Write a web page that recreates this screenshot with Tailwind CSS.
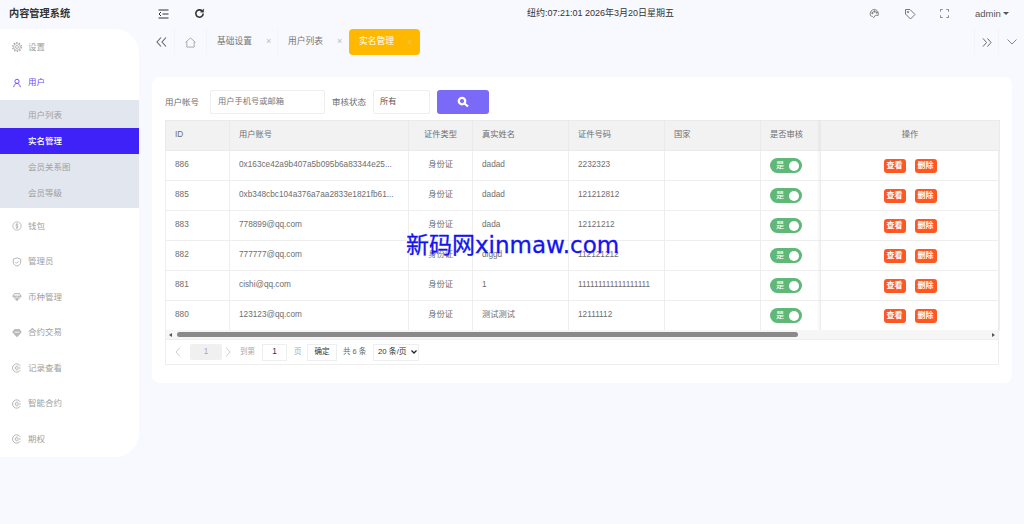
<!DOCTYPE html>
<html lang="zh"><head><meta charset="utf-8"><script src="https://cdn.jsdelivr.net/npm/@tailwindcss/browser@4"></script></head>
<body class="m-0 w-[1024px] h-[524px] overflow-hidden bg-[#f8f9fe] text-[8.25px] text-[#6e6e6e] font-['Liberation_Sans','Noto_Sans_CJK_SC',sans-serif] relative">
<div class="flex h-[524px]">
  <aside class="w-[139px] shrink-0 flex flex-col">
    <div class="h-[29px] pl-[9px] flex items-center text-[10.2px] font-semibold text-[#333] pb-[2px]">内容管理系统</div>
    <nav class="h-[428px] bg-white rounded-r-[24px] text-[8.5px] text-[#a0a0a0] flex flex-col">
      <div class="h-[36px] flex items-center gap-[6px] pl-[12px]"><svg class="w-[10px] h-[10px]" viewBox="0 0 24 24" fill="none" stroke="#aaa" stroke-width="2"><circle cx="12" cy="12" r="3.500"/><circle cx="12" cy="12" r="8"/><circle cx="12" cy="12" r="10.500" stroke-width="3" stroke-dasharray="3.500 3.100"/></svg>设置</div>
      <div class="h-[35px] flex items-center gap-[6px] pl-[12px] text-[#6a4cf5]"><svg class="w-[10px] h-[10px]" viewBox="0 0 24 24" fill="none" stroke="#6a4cf5" stroke-width="2.200"><circle cx="12" cy="8" r="5"/><path d="M4 22c1-6 4-9 8-9s7 3 8 9"/></svg>用户</div>
      <div class="h-[108px] bg-[#e2e6ef] flex flex-col">
        <div class="h-[28px] pl-[28px] pt-[3px] flex items-center">用户列表</div>
        <div class="h-[26px] pl-[28px] flex items-center bg-[#3e22f8] text-white font-medium">实名管理</div>
        <div class="h-[26px] pl-[28px] flex items-center">会员关系图</div>
        <div class="h-[26px] pl-[28px] flex items-center">会员等级</div>
      </div>
      <div class="h-[35.5px] mt-[0.500px] flex items-center gap-[6px] pl-[12px]"><svg class="w-[10px] h-[10px]" viewBox="0 0 24 24" fill="none" stroke="#aaa" stroke-width="1.800"><circle cx="12" cy="12" r="10"/><path d="M15 9c-1-2-6-2-6 .5S15 12 15 14.500 10 17 9 15M12 5v14"/></svg>钱包</div>
      <div class="h-[35.5px] flex items-center gap-[6px] pl-[12px]"><svg class="w-[10px] h-[10px]" viewBox="0 0 24 24" fill="none" stroke="#aaa" stroke-width="2"><path d="M12 2l9 3v7c0 5-4 8-9 10-5-2-9-5-9-10V5z"/><path d="M8 12l3 3 5-5"/></svg>管理员</div>
      <div class="h-[35.5px] flex items-center gap-[6px] pl-[12px]"><svg class="w-[10px] h-[10px]" viewBox="0 0 24 24" fill="none" stroke="#aaa" stroke-width="2.200"><path d="M6 4h12l4 6-10 11L2 10z"/><path d="M2 10h20M8 10l4 9 4-9"/></svg>币种管理</div>
      <div class="h-[35.5px] flex items-center gap-[6px] pl-[12px]"><svg class="w-[10px] h-[10px]" viewBox="0 0 24 24" fill="#bbb" stroke="#aaa" stroke-width="2"><path d="M6 4h12l4 6-10 11L2 10z"/><path stroke="#fff" d="M6 10h12"/></svg>合约交易</div>
      <div class="h-[35.5px] flex items-center gap-[6px] pl-[12px]"><svg class="w-[10px] h-[10px]" viewBox="0 0 24 24" fill="none" stroke="#aaa" stroke-width="2"><path d="M20 7a10 10 0 1 0 0 10"/><path d="M15 8.500a4.500 4.500 0 1 0 0 7M11 12h10"/></svg>记录查看</div>
      <div class="h-[35.5px] flex items-center gap-[6px] pl-[12px]"><svg class="w-[10px] h-[10px]" viewBox="0 0 24 24" fill="none" stroke="#aaa" stroke-width="2"><path d="M20 7a10 10 0 1 0 0 10"/><path d="M15 8.500a4.500 4.500 0 1 0 0 7M11 12h10"/></svg>智能合约</div>
      <div class="h-[35.5px] flex items-center gap-[6px] pl-[12px]"><svg class="w-[10px] h-[10px]" viewBox="0 0 24 24" fill="none" stroke="#aaa" stroke-width="2"><path d="M20 7a10 10 0 1 0 0 10"/><path d="M15 8.500a4.500 4.500 0 1 0 0 7M11 12h10"/></svg>期权</div>
    </nav>
  </aside>
  <main class="flex-1 min-w-0 flex flex-col">
    <header class="h-[29px] flex items-center pb-[2px] relative text-[#444]">
      <svg class="ml-[19px] w-[11px] h-[10px]" viewBox="0 0 22 20" fill="none" stroke="#333" stroke-width="2"><path d="M1 2h20M9 10h12M1 18h20M6 6l-4 4 4 4"/></svg>
      <svg class="ml-[25px] w-[11px] h-[11px]" viewBox="0 0 24 24" fill="none" stroke="#333" stroke-width="3.500"><path d="M20 12a8 8 0 1 1-2.500-5.800"/><path fill="#333" stroke-width="1" d="M21 2v7h-7z"/></svg>
      <div class="ml-[322px] text-[9px] text-[#333] whitespace-nowrap">纽约:07:21:01 2026年3月20日星期五</div>
      <svg class="absolute left-[730px] top-[8px] w-[11px] h-[11px]" viewBox="0 0 24 24" fill="none" stroke="#777" stroke-width="2"><path d="M12 3a10 10 0 0 0-9 13c1 3 4 1 5 3 1 2 4 2 4 0 0-3 2-3 5-3h3a10 10 0 0 0-8-13z"/><circle cx="7.500" cy="11" r="1.500" fill="#777"/><circle cx="12" cy="7.500" r="1.500" fill="#777"/><circle cx="17" cy="10" r="1.500" fill="#777"/></svg>
      <svg class="absolute left-[765px] top-[8px] w-[12px] h-[12px]" viewBox="0 0 24 24" fill="none" stroke="#777" stroke-width="2"><path d="M3 3h9l10 10-9 9L3 12z"/><circle cx="8" cy="8" r="1.500"/></svg>
      <svg class="absolute left-[801px] top-[9px] w-[9px] h-[9px]" viewBox="0 0 20 20" fill="none" stroke="#777" stroke-width="2"><path d="M1 6V1h5M14 1h5v5M19 14v5h-5M6 19H1v-5"/></svg>
      <div class="absolute left-[836px] top-[7px] text-[9.5px] text-[#555]">admin</div>
      <div class="absolute left-[864px] top-[12px] w-0 h-0 border-x-[3.500px] border-x-transparent border-t-[3.500px] border-t-[#555]"></div>
    </header>
    <div class="h-[26px] flex items-stretch text-[8.75px] text-[#777]">
      <div class="w-[36px] flex items-center justify-center border-r border-[#f3f4fa]"><svg class="w-[11px] h-[10px] ml-[10px]" viewBox="0 0 22 20" fill="none" stroke="#666" stroke-width="2.200"><path d="M10 1l-8 9 8 9M20 1l-8 9 8 9"/></svg></div>
      <div class="w-[32px] flex items-center justify-center border-r border-[#f3f4fa]"><svg class="w-[11px] h-[11px]" viewBox="0 0 24 24" fill="none" stroke="#999" stroke-width="1.800"><path d="M1 12L12 2l11 10M4 10v12h16V10"/></svg></div>
      <div class="w-[71px] pl-[10px] flex items-center gap-[14px] border-r border-[#f3f4fa] whitespace-nowrap">基础设置<span class="text-[#bbb] text-[9px]">×</span></div>
      <div class="w-[71px] pl-[10px] flex items-center gap-[14px] whitespace-nowrap">用户列表<span class="text-[#bbb] text-[9px]">×</span></div>
      <div class="w-[71px] pl-[10px] flex items-center gap-[13px] bg-[#ffb800] text-white rounded-[4px] whitespace-nowrap">实名管理<span class="text-[#e8c56a] text-[10px]">×</span></div>
      <div class="ml-auto w-[25px] flex items-center justify-center border-x border-[#f3f4fa]"><svg class="w-[10px] h-[9px]" viewBox="0 0 22 20" fill="none" stroke="#666" stroke-width="2.200"><path d="M2 1l8 9-8 9M12 1l8 9-8 9"/></svg></div>
      <div class="w-[25px] flex items-center justify-center"><svg class="w-[10px] h-[6px]" viewBox="0 0 20 12" fill="none" stroke="#777" stroke-width="1.800"><path d="M1 1l9 9 9-9"/></svg></div>
    </div>
    <section class="mt-[22px] ml-[13px] mr-[12px] h-[306px] bg-white rounded-[8px] pt-[13px] px-[13px]">
      <div class="h-[24px] flex items-center">
        <span class="w-[45px] shrink-0 text-[8.5px]">用户帐号</span>
        <div class="w-[115px] h-[24px] border border-[#eee] rounded-[2px] pl-[7px] flex items-center text-[#777]">用户手机号或邮箱</div>
        <span class="ml-[7px] w-[41px] shrink-0 text-[8.5px]">审核状态</span>
        <div class="w-[57px] h-[24px] border border-[#eee] rounded-[2px] pl-[6px] flex items-center text-[#555]">所有</div>
        <div class="ml-[7px] w-[52px] h-[24px] bg-[#7b69f8] rounded-[3px] flex items-center justify-center"><svg class="w-[12px] h-[12px]" viewBox="0 0 24 24" fill="none" stroke="#fff" stroke-width="4.500"><circle cx="10" cy="10" r="6.500"/><path d="M15 15l7 6"/></svg></div>
      </div>
      <div class="mt-[6px] w-[834px] border-x border-b border-[#eee] relative">
        <table class="w-[834px] -mx-px -mb-px table-fixed border-collapse">
          <colgroup><col class="w-[64px]"><col class="w-[179px]"><col class="w-[64px]"><col class="w-[96px]"><col class="w-[96px]"><col class="w-[96px]"><col class="w-[60px]"><col class="w-[179px]"></colgroup>
          <thead><tr class="h-[30px] bg-[#f2f2f2] text-left font-normal">
            <th class="font-normal border border-[#eaeaea] pl-[9px]">ID</th><th class="font-normal border border-[#eaeaea] pl-[9px]">用户账号</th><th class="font-normal border border-[#eaeaea] text-center">证件类型</th><th class="font-normal border border-[#eaeaea] pl-[9px]">真实姓名</th><th class="font-normal border border-[#eaeaea] pl-[9px]">证件号码</th><th class="font-normal border border-[#eaeaea] pl-[9px]">国家</th><th class="font-normal border border-[#eaeaea] pl-[9px]">是否审核</th><th class="font-normal border border-[#eaeaea] text-center">操作</th>
          </tr></thead>
          <tbody>
            <tr class="h-[30px]"><td class="border border-[#eee] pl-[9px]">886</td><td class="border border-[#eee] pl-[9px] whitespace-nowrap">0x163ce42a9b407a5b095b6a83344e25...</td><td class="border border-[#eee] text-center">身份证</td><td class="border border-[#eee] pl-[9px]">dadad</td><td class="border border-[#eee] pl-[9px]">2232323</td><td class="border border-[#eee]"></td><td class="border border-[#eee] pl-[9px]"><div class="w-[32px] h-[15px] rounded-full bg-[#5fb878] relative text-white pl-[6px] leading-[15px]">是<span class="absolute right-[3px] top-[2.500px] w-[10px] h-[10px] rounded-full bg-white"></span></div></td><td class="border border-[#eee] text-center"><div class="flex justify-center gap-[9px]"><span class="w-[22px] h-[14px] rounded-[3px] bg-[#ff5722] text-white leading-[14px] text-[8px] font-semibold">查看</span><span class="w-[22px] h-[14px] rounded-[3px] bg-[#ff5722] text-white leading-[14px] text-[8px] font-semibold">删除</span></div></td></tr>
            <tr class="h-[30px]"><td class="border border-[#eee] pl-[9px]">885</td><td class="border border-[#eee] pl-[9px] whitespace-nowrap">0xb348cbc104a376a7aa2833e1821fb61...</td><td class="border border-[#eee] text-center">身份证</td><td class="border border-[#eee] pl-[9px]">dadad</td><td class="border border-[#eee] pl-[9px]">121212812</td><td class="border border-[#eee]"></td><td class="border border-[#eee] pl-[9px]"><div class="w-[32px] h-[15px] rounded-full bg-[#5fb878] relative text-white pl-[6px] leading-[15px]">是<span class="absolute right-[3px] top-[2.500px] w-[10px] h-[10px] rounded-full bg-white"></span></div></td><td class="border border-[#eee] text-center"><div class="flex justify-center gap-[9px]"><span class="w-[22px] h-[14px] rounded-[3px] bg-[#ff5722] text-white leading-[14px] text-[8px] font-semibold">查看</span><span class="w-[22px] h-[14px] rounded-[3px] bg-[#ff5722] text-white leading-[14px] text-[8px] font-semibold">删除</span></div></td></tr>
            <tr class="h-[30px]"><td class="border border-[#eee] pl-[9px]">883</td><td class="border border-[#eee] pl-[9px] whitespace-nowrap">778899@qq.com</td><td class="border border-[#eee] text-center">身份证</td><td class="border border-[#eee] pl-[9px]">dada</td><td class="border border-[#eee] pl-[9px]">12121212</td><td class="border border-[#eee]"></td><td class="border border-[#eee] pl-[9px]"><div class="w-[32px] h-[15px] rounded-full bg-[#5fb878] relative text-white pl-[6px] leading-[15px]">是<span class="absolute right-[3px] top-[2.500px] w-[10px] h-[10px] rounded-full bg-white"></span></div></td><td class="border border-[#eee] text-center"><div class="flex justify-center gap-[9px]"><span class="w-[22px] h-[14px] rounded-[3px] bg-[#ff5722] text-white leading-[14px] text-[8px] font-semibold">查看</span><span class="w-[22px] h-[14px] rounded-[3px] bg-[#ff5722] text-white leading-[14px] text-[8px] font-semibold">删除</span></div></td></tr>
            <tr class="h-[30px]"><td class="border border-[#eee] pl-[9px]">882</td><td class="border border-[#eee] pl-[9px] whitespace-nowrap">777777@qq.com</td><td class="border border-[#eee] text-center">身份证</td><td class="border border-[#eee] pl-[9px]">diggd</td><td class="border border-[#eee] pl-[9px]">112121212</td><td class="border border-[#eee]"></td><td class="border border-[#eee] pl-[9px]"><div class="w-[32px] h-[15px] rounded-full bg-[#5fb878] relative text-white pl-[6px] leading-[15px]">是<span class="absolute right-[3px] top-[2.500px] w-[10px] h-[10px] rounded-full bg-white"></span></div></td><td class="border border-[#eee] text-center"><div class="flex justify-center gap-[9px]"><span class="w-[22px] h-[14px] rounded-[3px] bg-[#ff5722] text-white leading-[14px] text-[8px] font-semibold">查看</span><span class="w-[22px] h-[14px] rounded-[3px] bg-[#ff5722] text-white leading-[14px] text-[8px] font-semibold">删除</span></div></td></tr>
            <tr class="h-[30px]"><td class="border border-[#eee] pl-[9px]">881</td><td class="border border-[#eee] pl-[9px] whitespace-nowrap">cishi@qq.com</td><td class="border border-[#eee] text-center">身份证</td><td class="border border-[#eee] pl-[9px]">1</td><td class="border border-[#eee] pl-[9px]">111111111111111111</td><td class="border border-[#eee]"></td><td class="border border-[#eee] pl-[9px]"><div class="w-[32px] h-[15px] rounded-full bg-[#5fb878] relative text-white pl-[6px] leading-[15px]">是<span class="absolute right-[3px] top-[2.500px] w-[10px] h-[10px] rounded-full bg-white"></span></div></td><td class="border border-[#eee] text-center"><div class="flex justify-center gap-[9px]"><span class="w-[22px] h-[14px] rounded-[3px] bg-[#ff5722] text-white leading-[14px] text-[8px] font-semibold">查看</span><span class="w-[22px] h-[14px] rounded-[3px] bg-[#ff5722] text-white leading-[14px] text-[8px] font-semibold">删除</span></div></td></tr>
            <tr class="h-[30px]"><td class="border border-[#eee] pl-[9px]">880</td><td class="border border-[#eee] pl-[9px] whitespace-nowrap">123123@qq.com</td><td class="border border-[#eee] text-center">身份证</td><td class="border border-[#eee] pl-[9px]">测试测试</td><td class="border border-[#eee] pl-[9px]">12111112</td><td class="border border-[#eee]"></td><td class="border border-[#eee] pl-[9px]"><div class="w-[32px] h-[15px] rounded-full bg-[#5fb878] relative text-white pl-[6px] leading-[15px]">是<span class="absolute right-[3px] top-[2.500px] w-[10px] h-[10px] rounded-full bg-white"></span></div></td><td class="border border-[#eee] text-center"><div class="flex justify-center gap-[9px]"><span class="w-[22px] h-[14px] rounded-[3px] bg-[#ff5722] text-white leading-[14px] text-[8px] font-semibold">查看</span><span class="w-[22px] h-[14px] rounded-[3px] bg-[#ff5722] text-white leading-[14px] text-[8px] font-semibold">删除</span></div></td></tr>
          </tbody>
        </table>
        <div class="absolute left-[651px] top-0 h-[210px] w-[3px] bg-gradient-to-r from-black/0 to-black/5"></div>
        <div class="h-[9px] bg-[#f6f6f6] flex items-center px-[3px] gap-[3px]">
          <div class="w-0 h-0 border-y-[2.500px] border-y-transparent border-r-[3px] border-r-[#555]"></div>
          <div class="w-[621px] h-[5px] ml-[2px] rounded-full bg-[#8a8a8a]"></div>
          <div class="ml-auto w-0 h-0 border-y-[2.500px] border-y-transparent border-l-[3px] border-l-[#555]"></div>
        </div>
        <div class="h-[25px] flex items-center border-t border-[#eee] text-[#aaa] whitespace-nowrap">
          <svg class="ml-[9px] shrink-0 w-[6px] h-[10px]" viewBox="0 0 6 10" fill="none" stroke="#ccc"><path d="M5 0.500L1 5l4 4.500"/></svg>
          <div class="ml-[9px] shrink-0 w-[32px] h-[16px] bg-[#f0f0f0] rounded-[2px] flex items-center justify-center">1</div>
          <svg class="ml-[3px] shrink-0 w-[6px] h-[10px]" viewBox="0 0 6 10" fill="none" stroke="#ccc"><path d="M1 0.500L5 5l-4 4.500"/></svg>
          <span class="ml-[9px] w-[15px] shrink-0 text-[7.5px]">到第</span>
          <div class="ml-[7px] w-[25px] shrink-0 h-[17px] border border-[#eee] text-[#333] flex items-center justify-center">1</div>
          <span class="ml-[7px] w-[7px] shrink-0 text-[7.5px]">页</span>
          <div class="ml-[6px] w-[30px] shrink-0 h-[17px] border border-[#eee] text-[7.5px] text-[#333] flex items-center justify-center">确定</div>
          <span class="ml-[6px] w-[23px] shrink-0 text-[7.5px] text-[#666]">共 6 条</span>
          <div class="ml-[7px] w-[46px] shrink-0 h-[17px] border border-[#eee] text-[7.8px] text-[#333] flex items-center pl-[4px]">20 条/页<svg class="ml-[4px] w-[6px] h-[4px]" viewBox="0 0 12 8" fill="none" stroke="#222" stroke-width="2.500"><path d="M1 1l5 5 5-5"/></svg></div>
        </div>
      </div>
    </section>
  </main>
</div>
<div class="absolute left-[406px] top-[228px] text-[23px] leading-[30px] text-[#1414f0] whitespace-nowrap font-['DejaVu_Sans','Noto_Sans_CJK_SC',sans-serif] [-webkit-text-stroke:0.3px_#1414f0]"><span class="font-['Noto_Sans_CJK_SC']">新码网</span>xinmaw.com</div>
</body></html>
